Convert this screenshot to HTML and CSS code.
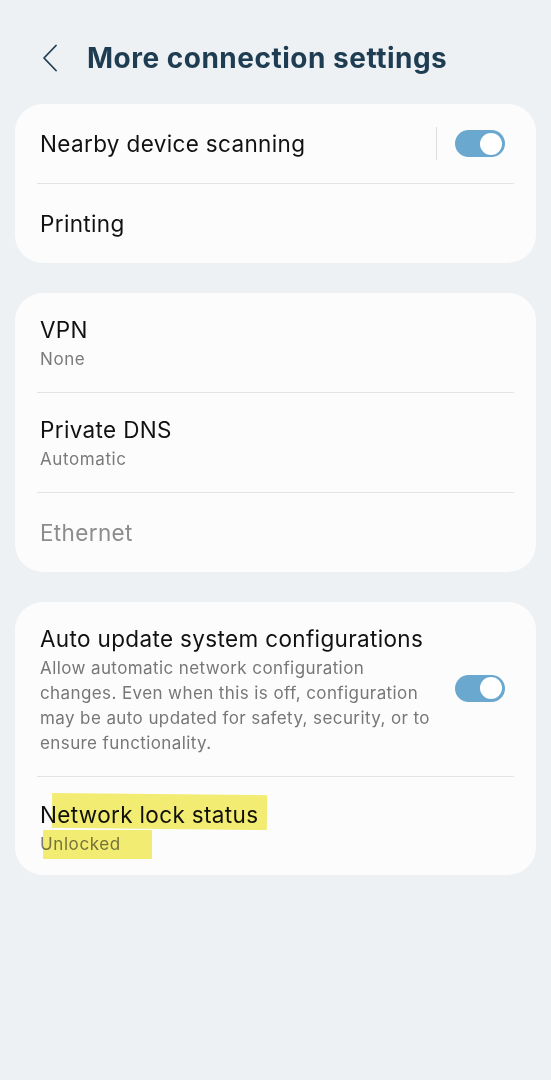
FILE: index.html
```html
<!DOCTYPE html>
<html>
<head>
<meta charset="utf-8">
<link rel="stylesheet" href="styles.css">
</head>
<body>
<div class="screen">
  <header class="header">
    <svg class="back" width="16" height="28" viewBox="0 0 16 28"><path d="M14 1.5 L2 14 L14 26.5" fill="none" stroke="#1f3d52" stroke-width="1.8" stroke-linecap="round" stroke-linejoin="round"/></svg>
    <h1 class="title">More connection settings</h1>
  </header>

  <section class="card">
    <div class="row row-single">
      <div class="label">Nearby device scanning</div>
      <div class="vsep"></div>
      <div class="toggle"><span class="knob"></span></div>
    </div>
    <div class="divider"></div>
    <div class="row row-single">
      <div class="label">Printing</div>
    </div>
  </section>

  <section class="card">
    <div class="row row-double">
      <div class="text">
        <div class="label">VPN</div>
        <div class="sub">None</div>
      </div>
    </div>
    <div class="divider"></div>
    <div class="row row-double">
      <div class="text">
        <div class="label">Private DNS</div>
        <div class="sub">Automatic</div>
      </div>
    </div>
    <div class="divider"></div>
    <div class="row row-single">
      <div class="label disabled">Ethernet</div>
    </div>
  </section>

  <section class="card">
    <div class="row row-multi">
      <div class="text text-wide">
        <div class="label">Auto update system configurations</div>
        <div class="desc">Allow automatic network configuration changes. Even when this is off, configuration may be auto updated for safety, security, or to ensure functionality.</div>
      </div>
      <div class="toggle toggle-up"><span class="knob"></span></div>
    </div>
    <div class="divider"></div>
    <div class="row row-last">
      <div class="text">
        <div class="label hl-wrap">Network lock status<span class="hl hl-1"></span></div>
        <div class="sub hl-wrap">Unlocked<span class="hl hl-2"></span></div>
      </div>
    </div>
  </section>
</div>
</body>
</html>
```

FILE: styles.css
```css
* { box-sizing: border-box; }
html, body { margin: 0; padding: 0; }
body {
  background: #eef1f4;
  font-family: Inter, "Noto Sans", sans-serif;
  width: 551px;
  height: 1080px;
  overflow: hidden;
}
.screen {
  display: flex;
  flex-direction: column;
  padding: 0 15px;
}
.header {
  display: flex;
  align-items: center;
  height: 104px;
  padding-left: 27px;
  padding-top: 12px;
}
.back { display: block; margin-right: 29px; }
.title {
  margin: 0;
  font-size: 28px;
  font-weight: 700;
  color: #1f3d52;
  letter-spacing: 0.5px;
}
.card {
  background: #fcfcfc;
  border-radius: 28px;
  margin-bottom: 30px;
  display: flex;
  flex-direction: column;
}
.row {
  display: flex;
  align-items: center;
  padding: 0 31px 0 25px;
}
.row-single { height: 79px; }
.row-double { height: 99px; padding-top: 3px; }
.row-multi { padding-top: 22px; padding-bottom: 20px; }
.row-last { padding-top: 23px; padding-bottom: 17px; }
.text { flex: 1; display: flex; flex-direction: column; }
.text-wide { flex: 0 0 395px; margin-right: 20px; }
.label {
  flex: 1;
  font-size: 22.5px;
  line-height: 30px;
  letter-spacing: 0.35px;
  color: #111;
}
.label.disabled { color: #8c8c8c; }
.sub {
  font-size: 17px;
  line-height: 28px;
  letter-spacing: 0.6px;
  color: #7a7a7a;
}
.desc {
  font-size: 17px;
  line-height: 25px;
  letter-spacing: 0.4px;
  color: #777;
  margin-top: 2px;
}
.divider {
  height: 1px;
  background: #e3e3e3;
  margin: 0 22px;
}
.vsep {
  width: 1px;
  height: 33px;
  background: #dcdcdc;
  margin-right: 18px;
}
.toggle {
  width: 50px;
  height: 27px;
  border-radius: 14px;
  background: #6aa8d0;
  display: flex;
  align-items: center;
  justify-content: flex-end;
  padding-right: 3px;
  flex: 0 0 auto;
}
.toggle-up { margin-bottom: 4px; }
.knob {
  width: 22px;
  height: 22px;
  border-radius: 50%;
  background: #fff;
}
.hl-wrap { position: relative; align-self: flex-start; }
.hl {
  position: absolute;
  background: #f4ec5c;
  mix-blend-mode: multiply;
  opacity: 0.85;
}
.hl-1 { left: 12px; top: -6px; width: 215px; height: 35px; transform: rotate(0.6deg); }
.hl-2 { left: 3px; top: 0px; width: 109px; height: 29px; }
```
